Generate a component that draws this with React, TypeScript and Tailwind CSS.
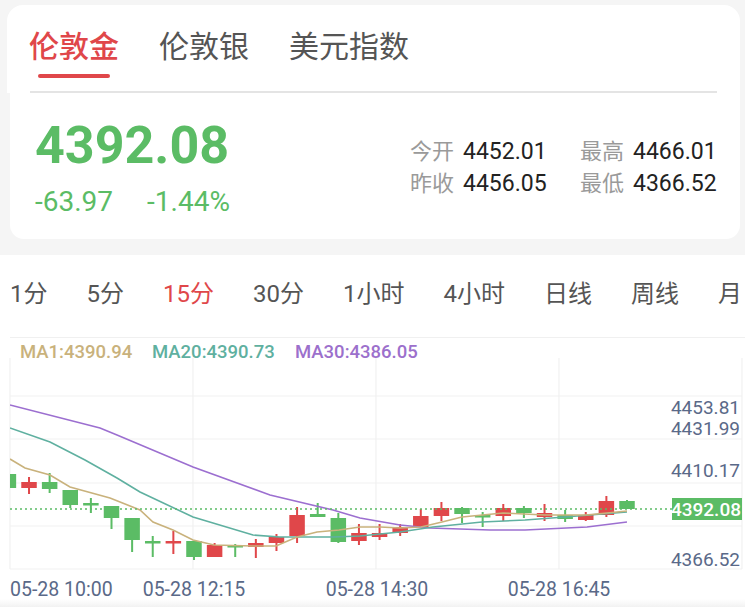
import React from 'react';

const RED = '#e0474a';
const GREEN = '#5bbc65';

type Candle = [number, number, number, number, number, 'r' | 'g'];

// [bodyTop, bodyBottom, wickTop, wickBottom] in page pixels
const candles: [number, number, number, number, 'r' | 'g'][] = [
  [474, 488, 474, 488, 'g'],
  [482, 488, 477, 494, 'r'],
  [482, 489, 473, 493, 'g'],
  [490, 505, 490, 508, 'g'],
  [503, 505, 498, 513, 'g'],
  [506, 518, 506, 529, 'g'],
  [518, 540, 518, 552, 'g'],
  [541, 543, 536, 557, 'g'],
  [541, 543, 531, 554, 'r'],
  [541, 557, 541, 560, 'g'],
  [545, 557, 543, 557, 'r'],
  [545, 547, 544, 557, 'g'],
  [543, 547, 539, 558, 'r'],
  [537, 543, 534, 551, 'r'],
  [515, 536, 507, 543, 'r'],
  [514, 517, 503, 517, 'g'],
  [518, 542, 513, 543, 'g'],
  [533, 541, 524, 545, 'r'],
  [533, 537, 524, 540, 'r'],
  [527, 533, 524, 536, 'r'],
  [516, 527, 509, 527, 'r'],
  [508, 516, 502, 521, 'r'],
  [508, 514, 507, 523, 'g'],
  [515, 517, 512, 527, 'g'],
  [508, 516, 504, 521, 'r'],
  [508, 513, 506, 518, 'g'],
  [513, 517, 504, 521, 'r'],
  [515, 519, 510, 522, 'g'],
  [515, 520, 512, 521, 'r'],
  [501, 515, 496, 517, 'r'],
  [501, 509, 500, 509, 'g'],
];

const data: Candle[] = candles.map((c, i) => [8.4 + 20.62 * i, c[0], c[1], c[2], c[3], c[4]]);

const ma30 = '10,405 100,428 117,435 193,467 270,495 333,510 360,518 400,525 430,528 490,530 525,530 587,527 627,522';
const ma20 = '10,428 50,442 85,460 117,478 140,492 193,517 253,535 280,537 333,537 360,536 400,532 433,527 482,522 525,520 565,517 627,512';
const ma1 = '10,459 25,468 50,475 70,487 110,498 140,510 153,522 173,530 193,540 214,545 253,546 276,546 297,537 317,532 339,530 360,527 380,527 400,528 421,527 442,522 462,517 503,513 545,515 586,515 607,513 627,511';

const periods = ['1分', '5分', '15分', '30分', '1小时', '4小时', '日线', '周线', '月'];

function Chart() {
  return (
    <svg width={745} height={269} viewBox="0 338 745 269" className="block">
      <defs>
        <clipPath id="plot">
          <rect x={10} y={352} width={732} height={217} />
        </clipPath>
        <linearGradient id="fade" x1="0" y1="0" x2="0" y2="1">
          <stop offset="0" stopColor="#ffffff" />
          <stop offset="1" stopColor="#f2f2f2" />
        </linearGradient>
      </defs>

      {[396, 439, 483, 526, 569].map((y) => (
        <line key={y} x1={10} x2={742} y1={y} y2={y} stroke="#f1f1f1" strokeWidth={1.2} />
      ))}
      {[10, 193, 376, 559, 742].map((x) => (
        <line key={x} x1={x} x2={x} y1={358} y2={569} stroke="#f1f1f1" strokeWidth={1.2} />
      ))}

      <text y={357.5} fontSize={18.5} fontWeight={500}>
        <tspan x={20} fill="#c9b27c">MA1:4390.94</tspan>
        <tspan x={152} fill="#5fb0a0">MA20:4390.73</tspan>
        <tspan x={295} fill="#9c70cc">MA30:4386.05</tspan>
      </text>

      <g clipPath="url(#plot)">
        {data.map(([cx, bt, bb, wt, wb, c], i) => {
          const col = c === 'r' ? RED : GREEN;
          return (
            <g key={i}>
              <rect x={cx - 1} y={wt} width={2} height={wb - wt} fill={col} />
              <rect x={cx - 7.75} y={bt} width={15.5} height={Math.max(bb - bt, 2.5)} fill={col} />
            </g>
          );
        })}
        <polyline points={ma30} fill="none" stroke="#9c6fd0" strokeWidth={1.6} />
        <polyline points={ma20} fill="none" stroke="#5fb0a0" strokeWidth={1.6} />
        <polyline points={ma1} fill="none" stroke="#c9b27c" strokeWidth={1.6} />
      </g>

      <line x1={10} x2={672} y1={509} y2={509} stroke={GREEN} strokeWidth={1.6} strokeDasharray="2 3" />
      <rect x={672} y={498} width={70} height={22} fill={GREEN} />

      <g fontSize={19} fill="#5a6988" textAnchor="end">
        <text x={740} y={414}>4453.81</text>
        <text x={740} y={435}>4431.99</text>
        <text x={740} y={477}>4410.17</text>
        <text x={741} y={515.5} fill="#ffffff" fontWeight={500}>4392.08</text>
        <text x={740} y={566}>4366.52</text>
      </g>

      <g fontSize={19.5} fill="#5a6988">
        <text x={10} y={595.5}>05-28 10:00</text>
        <text x={194} y={595.5} textAnchor="middle">05-28 12:15</text>
        <text x={377} y={595.5} textAnchor="middle">05-28 14:30</text>
        <text x={559} y={595.5} textAnchor="middle">05-28 16:45</text>
      </g>

      <rect x={0} y={599} width={745} height={8} fill="url(#fade)" />
    </svg>
  );
}

export default function App() {
  return (
    <div className="w-[745px] h-[607px] overflow-hidden bg-[#f5f5f5] font-['Roboto','Noto_Sans_CJK_SC',sans-serif] flex flex-col">
      {/* market tabs */}
      <div className="mt-[5px] ml-[7px] w-[733px] h-[88px] bg-white rounded-t-[16px] flex flex-col">
        <div className="flex gap-[40px] pl-[22px] pt-[27px] text-[30px] leading-[30px]">
          <div className="flex flex-col items-center">
            <span className="text-[#e0474a] font-medium">伦敦金</span>
            <span className="mt-[12px] w-[72px] h-[4px] rounded-full bg-[#e0474a]" />
          </div>
          <span className="text-[#555555]">伦敦银</span>
          <span className="text-[#555555]">美元指数</span>
        </div>
        <div className="mt-auto mx-[23px] h-[1.5px] bg-[#e4e4e4]" />
      </div>

      {/* quote card */}
      <div className="ml-[10px] w-[730px] h-[147px] bg-white rounded-b-[14px] flex">
        <div className="w-[400px] pl-[25px] pt-[27px] flex flex-col">
          <span className="text-[52px] leading-none font-bold text-[#5bbc65]">4392.08</span>
          <div className="mt-[16px] flex gap-[34px] text-[28px] leading-none text-[#5bbc65]">
            <span>-63.97</span>
            <span>-1.44%</span>
          </div>
        </div>
        <div className="pt-[43px] grid grid-cols-[170px_auto] content-start">
          {[
            ['今开', '4452.01'],
            ['最高', '4466.01'],
            ['昨收', '4456.05'],
            ['最低', '4366.52'],
          ].map(([k, v]) => (
            <div key={k} className="h-[32px] flex items-center gap-[9px]">
              <span className="text-[22px] leading-none text-[#9a9a9a]">{k}</span>
              <span className="text-[23px] leading-none text-[#222222]">{v}</span>
            </div>
          ))}
        </div>
      </div>

      {/* chart panel */}
      <div className="mt-[16px] flex-1 bg-white flex flex-col">
        <div className="h-[82px] flex items-center gap-[39px] pl-[10px] pb-[4px] text-[24px] text-[#555555] whitespace-nowrap">
          {periods.map((p) => (
            <span key={p} className={p === '15分' ? 'text-[#e0474a]' : ''}>
              {p}
            </span>
          ))}
        </div>
        <div className="ml-[10px] h-px bg-[#f0f0f0]" />
        <Chart />
      </div>
    </div>
  );
}
